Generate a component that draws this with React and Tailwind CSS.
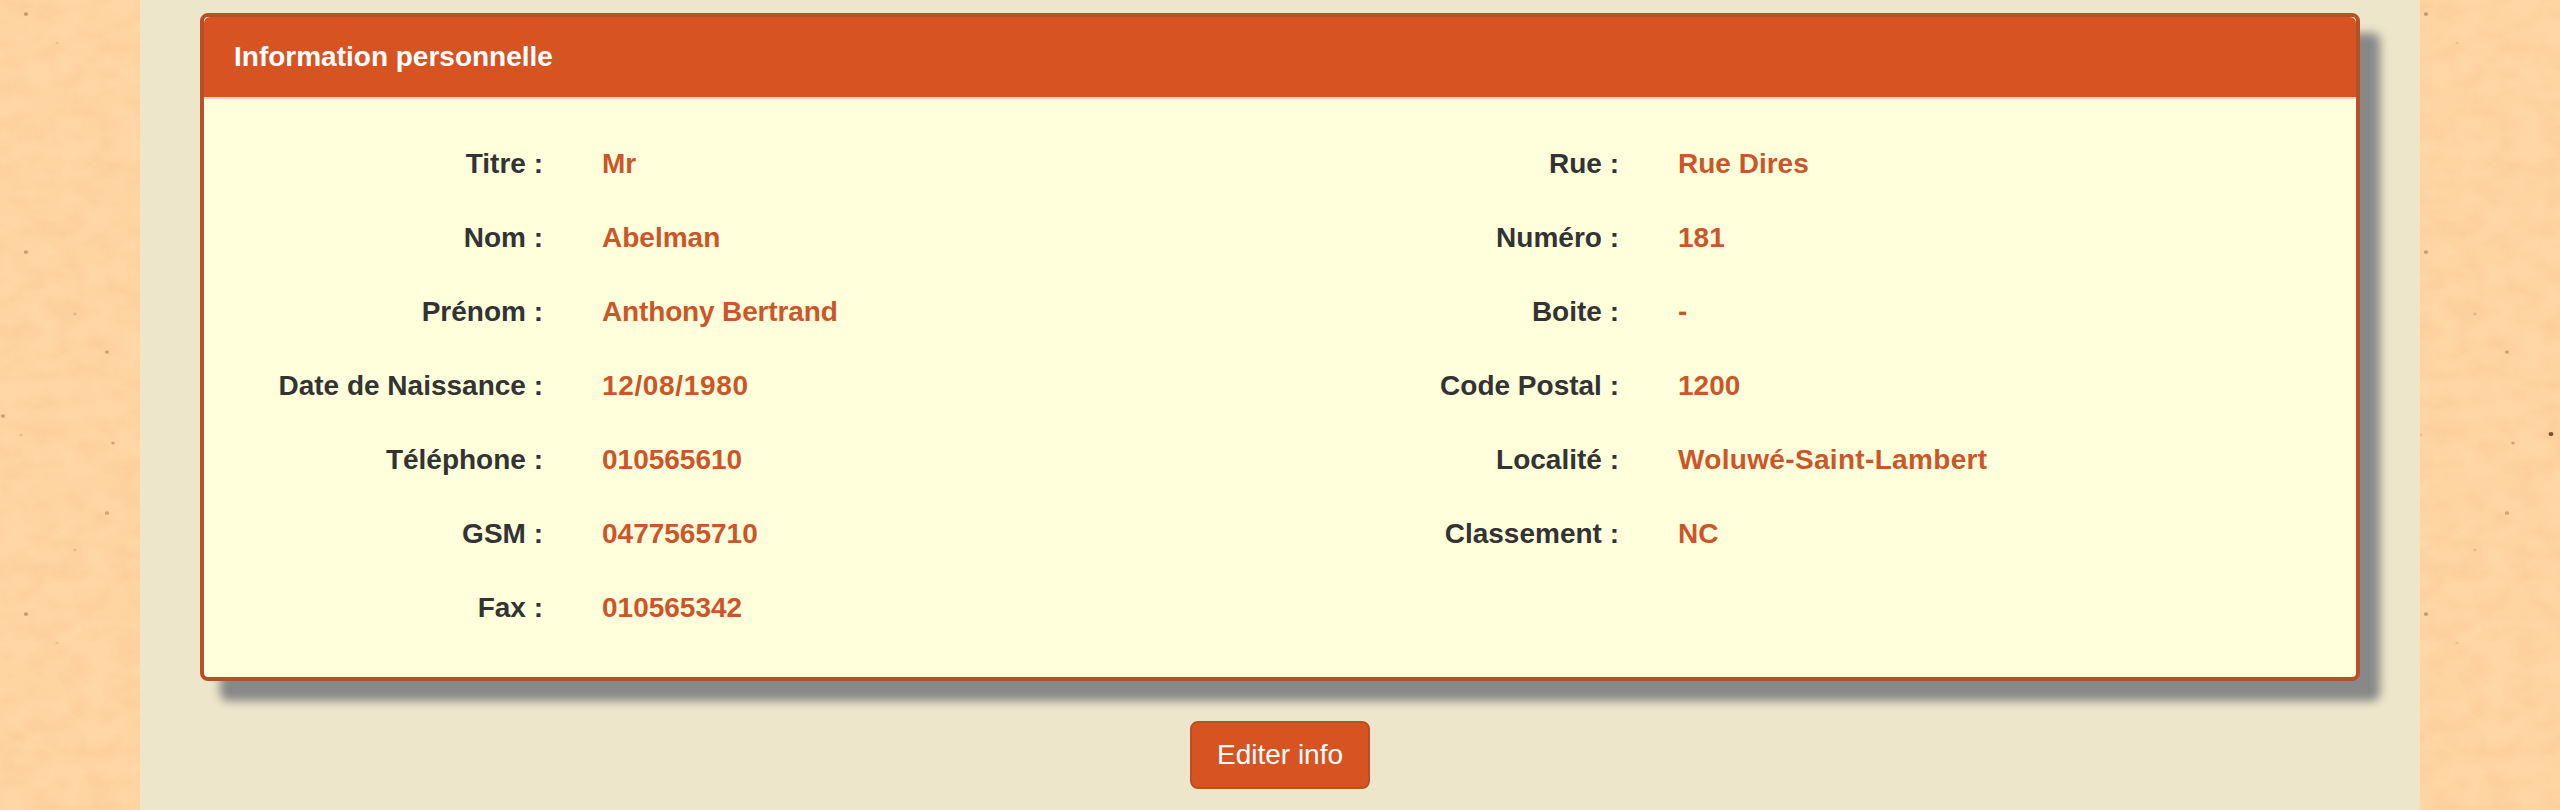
const identity = [
  ["Titre", "Mr"],
  ["Nom", "Abelman"],
  ["Prénom", "Anthony Bertrand", "tracking-[-0.15px]"],
  ["Date de Naissance", "12/08/1980", "tracking-[0.65px]"],
  ["Téléphone", "010565610"],
  ["GSM", "0477565710"],
  ["Fax", "010565342"],
];

const address = [
  ["Rue", "Rue Dires"],
  ["Numéro", "181"],
  ["Boite", "-"],
  ["Code Postal", "1200"],
  ["Localité", "Woluwé-Saint-Lambert", "tracking-[0.33px]"],
  ["Classement", "NC"],
];

// Flecks of the paper tile: x, y, radius, opacity
const flecks = [
  [26, 14, 2.2, 0.4],
  [57, 43, 1.6, 0.12],
  [26, 252, 2.2, 0.38],
  [75, 314, 1.8, 0.16],
  [107, 352, 2.2, 0.32],
  [3, 416, 2.2, 0.35],
  [21, 435, 1.8, 0.14],
  [151, 434, 2.5, 0.9],
  [113, 443, 1.8, 0.32],
  [107, 513, 2.2, 0.32],
  [75, 550, 1.8, 0.16],
  [26, 614, 2.2, 0.4],
  [57, 643, 1.6, 0.12],
];

function Paper({ id, offset }) {
  return (
    <svg
      className="h-[810px] w-[140px] shrink-0 bg-[#ffd7a4]"
      viewBox={`${offset} 0 140 810`}
      aria-hidden="true"
    >
      <filter id={id} x="0" y="0" width="100%" height="100%" colorInterpolationFilters="sRGB">
        <feTurbulence type="fractalNoise" baseFrequency="0.035 0.05" numOctaves="4" seed="8" />
        <feColorMatrix values="0 0 0 0 0.97  0 0 0 0 0.75  0 0 0 0 0.53  0.65 0 0 0 -0.2" />
      </filter>
      <rect x={offset} width="140" height="810" filter={`url(#${id})`} />
      {flecks.map(([x, y, r, o]) => (
        <ellipse key={`${x}-${y}`} cx={x} cy={y} rx={r} ry={r * 0.85} fill="#70451d" opacity={o} />
      ))}
    </svg>
  );
}

function Fields({ rows }) {
  return (
    <dl className="w-1/2">
      {rows.map(([label, value, tracking = ""]) => (
        <div key={label} className="flex h-[74px] pt-[15px] leading-10">
          <dt className="w-[339px] text-right text-[#333333]">{label} :</dt>
          <dd className={`pl-[59px] text-[#cb562b] ${tracking}`}>{value}</dd>
        </div>
      ))}
    </dl>
  );
}

export default function App() {
  return (
    <div className="flex h-[810px] w-[2560px] overflow-hidden font-['Liberation_Sans',Arial,sans-serif] text-[28px]">
      <Paper id="paper-left" offset={0} />
      <main className="flex flex-1 flex-col items-center bg-[#eee6ca] px-[60px] pt-[13px]">
        <section className="h-[668px] w-full rounded-lg border-4 border-[#b55028] bg-[#ffffdc] font-bold shadow-[20px_20px_10px_#888888]">
          <h2 className="rounded-t-md border-b-2 border-[#f5d5bf] bg-[#d75322] px-[30px] py-5 leading-10 text-white">
            Information personnelle
          </h2>
          <div className="flex py-[30px]">
            <Fields rows={identity} />
            <Fields rows={address} />
          </div>
        </section>
        <button className="mt-10 h-[68px] w-[180px] rounded-lg border-2 border-[#b84f29] bg-[#d75322] leading-10 text-white">
          Editer info
        </button>
      </main>
      <Paper id="paper-right" offset={20} />
    </div>
  );
}
